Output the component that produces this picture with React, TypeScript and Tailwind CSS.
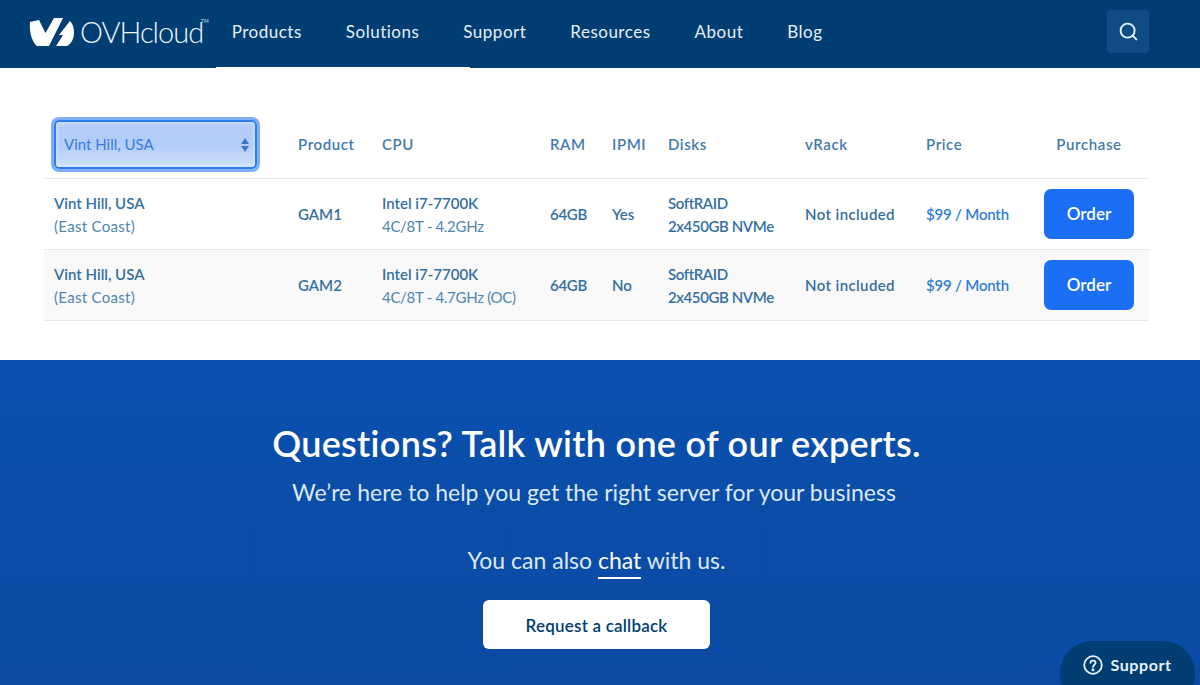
import { Search } from 'lucide-react'

const font = { fontFamily: '"Lato", "Open Sans", sans-serif' }

const navItems = ['Products', 'Solutions', 'Support', 'Resources', 'About', 'Blog']

const rows = [
  { product: 'GAM1', clock: '4C/8T - 4.2GHz', ipmi: 'Yes', tint: '' },
  { product: 'GAM2', clock: '4C/8T - 4.7GHz (OC)', ipmi: 'No', tint: 'bg-[#f9f9f9]' },
]

const columns = 'grid grid-cols-[244px_84px_168px_62px_56px_137px_121px_118px_1fr] items-center pl-[10px]'

function Logo() {
  return (
    <div className="flex items-center">
      <svg width="46" height="28" viewBox="0 0 46 28" fill="#ffffff">
        <path d="M1 4 L10 2 L16.5 15 L25 0 L34 0 L20 28 L8 28 C3 24 0 14 1 4 Z" />
        <path d="M41 3 L30 17 L34 17 L27 28 L38 28 C42 26 45 21 45 15 C45 10 44 6 41 3 Z" />
      </svg>
      <span className="ml-[5px] text-[29px] font-light leading-none tracking-[-1px] text-[#eef5fb]">OVHcloud</span>
      <span className="mb-[20px] ml-[-2px] text-[5px] leading-none text-[#d7e4f0]">TM</span>
    </div>
  )
}

function Header() {
  return (
    <header className="relative flex h-[68px] items-center bg-[#003d72] pb-[5px] pl-[29px] pr-[51px]">
      <Logo />
      <nav className="ml-[23px] flex items-center gap-[44px] text-[17px] tracking-[0.5px] text-[#e6eff7]">
        {navItems.map((item) => (
          <span key={item}>{item}</span>
        ))}
      </nav>
      <button className="ml-auto flex h-[43px] w-[42px] items-center justify-center rounded-[4px] bg-[#0f4c83]">
        <Search className="h-[21px] w-[21px] text-[#e3f1fb]" strokeWidth={2.2} />
      </button>
      <div className="absolute bottom-[-1px] left-[216px] h-[2px] w-[254px] bg-white" />
    </header>
  )
}

function LocationSelect() {
  return (
    <div className="flex h-[49px] w-[203px] items-center justify-between rounded-[5px] border-2 border-[#2f7cf0] bg-gradient-to-b from-[#b6cef8] via-[#b2ccf8] to-[#cfe0fc] pl-[8px] pr-[6px] shadow-[0_0_0_3px_#7fb0f7,inset_0_0_4px_#e4eefd]">
      <span className="text-[15px] text-[#3a7be0]">Vint Hill, USA</span>
      <span className="flex flex-col gap-[2px]">
        <span className="h-0 w-0 border-x-[4px] border-b-[6px] border-x-transparent border-b-[#3a78c8]" />
        <span className="h-0 w-0 border-x-[4px] border-t-[6px] border-x-transparent border-t-[#3a78c8]" />
      </span>
    </div>
  )
}

function PricingTable() {
  const head = 'text-[15px] font-semibold tracking-[0.6px] text-[#3f7cae]'
  const cell = 'text-[15px] font-semibold text-[#34709f]'
  const sub = 'text-[15px] text-[#4f86b2]'
  return (
    <section className="h-[292px] bg-white px-[51px] pt-[50px]">
      <div className="ml-[-7px]">
        <div className={`${columns} h-[61px] border-b border-[#e6e8ea] pb-[7px]`}>
          <LocationSelect />
          {['Product', 'CPU', 'RAM', 'IPMI', 'Disks', 'vRack', 'Price'].map((label) => (
            <span key={label} className={head}>
              {label}
            </span>
          ))}
          <span className={`${head} pr-[15px] text-center`}>Purchase</span>
        </div>
        {rows.map((row) => (
          <div key={row.product} className={`${columns} h-[71px] border-b border-[#e6e8ea] ${row.tint}`}>
            <div className="mt-[2px] leading-[23px]">
              <div className={cell}>Vint Hill, USA</div>
              <div className={`${sub} tracking-[0.3px]`}>(East Coast)</div>
            </div>
            <span className={cell}>{row.product}</span>
            <div className="mt-[2px] leading-[23px]">
              <div className={cell}>Intel i7-7700K</div>
              <div className={`${sub} tracking-[-0.3px]`}>{row.clock}</div>
            </div>
            <span className={`${cell} tracking-[-0.3px]`}>64GB</span>
            <span className={cell}>{row.ipmi}</span>
            <div className={`${cell} mt-[2px] leading-[23px] tracking-[-0.4px]`}>
              <div>SoftRAID</div>
              <div>2x450GB NVMe</div>
            </div>
            <span className={`${cell} tracking-[0.4px]`}>Not included</span>
            <span className="text-[15px] font-semibold tracking-[-0.2px] text-[#2f7dd6]">$99 / Month</span>
            <div className="flex justify-center pr-[15px]">
              <button className="h-[50px] w-[90px] rounded-[7px] bg-[#1a6ff5] text-[17px] font-semibold text-white">
                Order
              </button>
            </div>
          </div>
        ))}
      </div>
    </section>
  )
}

function Experts() {
  return (
    <section className="relative flex h-[325px] flex-col items-center bg-gradient-to-b from-[#0a50ae] to-[#0a4aa3] pr-[7px] pt-[61px] text-center">
      <h2 className="text-[36px] font-semibold leading-[44px] tracking-[0.3px] text-white">
        Questions? Talk with one of our experts.
      </h2>
      <p className="mr-[5px] mt-[11px] text-[23px] leading-[32px] text-[#dce8f6]">
        We’re here to help you get the right server for your business
      </p>
      <p className="mt-[36px] text-[23px] leading-[32px] text-[#dce8f6]">
        You can also <span className="border-b-2 border-white pb-[3px] text-white">chat</span> with us.
      </p>
      <button className="mt-[24px] h-[49px] w-[227px] rounded-[6px] bg-white pt-[2px] text-[17px] font-semibold tracking-[0.2px] text-[#003d72]">
        Request a callback
      </button>
      <div className="absolute bottom-[-21px] right-[5px] flex h-[65px] w-[135px] items-start justify-center gap-[7px] rounded-[32px] bg-[#003d72] pt-[14px]">
        <svg width="20" height="20" viewBox="0 0 20 20" fill="none" stroke="#e8f3fb" strokeWidth="1.8">
          <circle cx="10" cy="10" r="8.8" />
          <path d="M7.5 7.8 C7.5 4.8 12.6 4.8 12.6 7.8 C12.6 9.8 10 9.6 10 12" strokeLinecap="round" />
          <circle cx="10" cy="14.8" r="0.6" fill="#e8f3fb" />
        </svg>
        <span className="text-[16px] font-bold leading-[20px] tracking-[0.6px] text-[#e8f3fb]">Support</span>
      </div>
    </section>
  )
}

export default function App() {
  return (
    <div className="h-[685px] w-[1200px] overflow-hidden" style={font}>
      <Header />
      <PricingTable />
      <Experts />
    </div>
  )
}
